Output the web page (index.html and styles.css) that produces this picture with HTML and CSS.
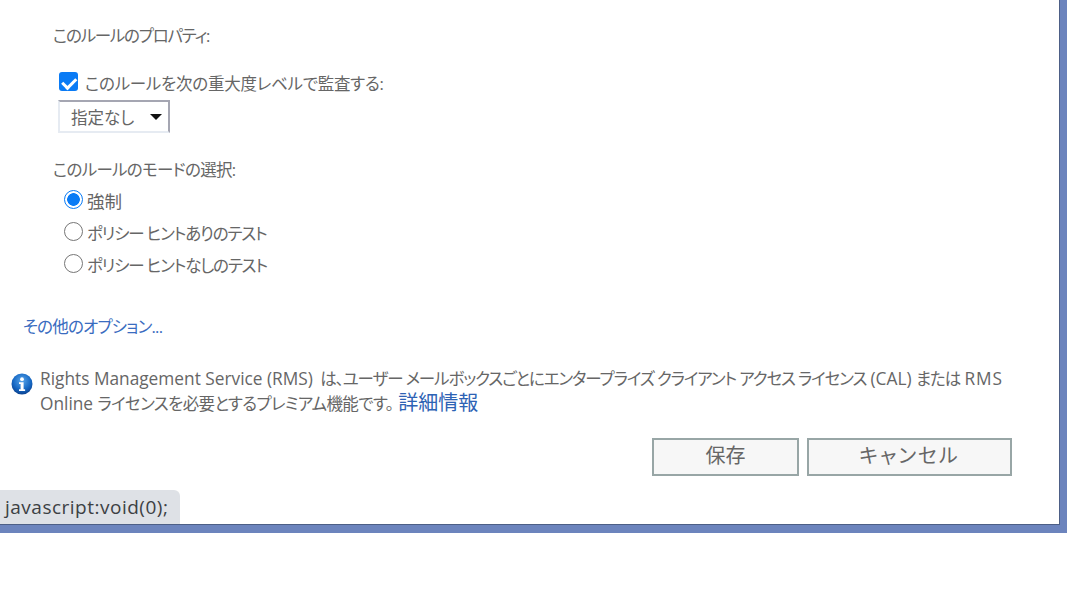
FILE: index.html
```html
<!DOCTYPE html>
<html lang="ja">
<head>
<meta charset="utf-8">
<title>ルールのプロパティ</title>
<link rel="stylesheet" href="styles.css">
</head>
<body>
<div class="frame">
  <main class="panel">
    <section class="props">
      <div class="label heading">このルールのプロパティ:</div>
      <label class="check-row">
        <input type="checkbox" class="check" checked>
        <span>このルールを次の重大度レベルで監査する:</span>
      </label>
      <div class="select"><span>指定なし</span><i class="caret"></i></div>
      <div class="label mode">このルールのモードの選択:</div>
      <div class="radios">
        <label class="radio-row"><input type="radio" name="m" class="radio" checked><span class="kanji">強制</span></label>
        <label class="radio-row"><input type="radio" name="m" class="radio"><span>ポリシー ヒントありのテスト</span></label>
        <label class="radio-row"><input type="radio" name="m" class="radio"><span>ポリシー ヒントなしのテスト</span></label>
      </div>
    </section>
    <a class="more" href="#">その他のオプション...</a>
    <div class="notice">
      <svg class="info" width="22" height="22" viewBox="0 0 22 22" aria-hidden="true">
        <defs>
          <radialGradient id="g" cx="0.5" cy="0.35" r="0.7">
            <stop offset="0" stop-color="#5aa6ea"/>
            <stop offset="0.6" stop-color="#1668c4"/>
            <stop offset="1" stop-color="#0a3a84"/>
          </radialGradient>
        </defs>
        <circle cx="11" cy="11" r="10.5" fill="url(#g)"/>
        <circle cx="11" cy="6.2" r="1.9" fill="#fff"/>
        <path d="M8 9.2h4.6v7h1.5v1.8H8v-1.8h1.6v-5.2H8z" fill="#fff"/>
      </svg>
      <p><span class="lat">Rights Management Service (RMS)</span> <span class="cjk first">は、ユーザー メールボックスごとにエンタープライズ クライアント アクセス ライセンス</span> <span class="lat">(CAL)</span> <span class="cjk">または</span> <span class="lat rms">RMS</span> <span class="lat">Online</span> <span class="cjk second">ライセンスを必要とするプレミアム機能です。</span><a href="#" class="detail">詳細情報</a></p>
    </div>
    <div class="actions">
      <button class="btn save">保存</button>
      <button class="btn cancel">キャンセル</button>
    </div>
    <div class="status">javascript:void(0);</div>
  </main>
</div>
</body>
</html>
```
FILE: styles.css
```css
* { box-sizing: border-box; }
html, body { margin: 0; padding: 0; background: #fff; }
body {
  width: 1067px;
  height: 611px;
  overflow: hidden;
  font-family: "Open Sans", "Noto Sans CJK JP", sans-serif;
  font-feature-settings: "palt";
  color: #666;
  font-size: 16.5px;
}
.frame {
  width: 1067px;
  height: 533px;
  background: #6c84bd;
  padding: 0 7px 8px 0;
}
.panel {
  position: relative;
  height: 525px;
  background: #fff;
  border-right: 1px solid #4d5f86;
  border-bottom: 1px solid #4d5f86;
  overflow: hidden;
}
.props { padding: 25px 0 0 53px; }
.label { height: 22px; line-height: 22px; white-space: nowrap; }
.heading { letter-spacing: -1.25px; }
.check-row {
  display: flex;
  align-items: center;
  height: 22px;
  margin: 25px 0 0 5px;
  letter-spacing: -0.25px;
}
.check {
  appearance: none;
  width: 19px;
  height: 19px;
  margin: 0 7px 3px 1px;
  border-radius: 3px;
  background: #0a7bf5;
  position: relative;
}
.check::after {
  content: "";
  position: absolute;
  left: 6px;
  top: 2.5px;
  width: 5.5px;
  height: 10.5px;
  border: solid #fff;
  border-width: 0 3px 3px 0;
  transform: rotate(45deg);
}
.select {
  display: flex;
  align-items: center;
  width: 112px;
  height: 33px;
  margin: 6px 0 0 5px;
  padding-left: 11px;
  border: 2px solid;
  border-color: #a5a6b2 #a5a6b2 #e6ebf2 #e6ebf2;
}
.caret {
  width: 0;
  height: 0;
  margin-left: 16px;
  border: 6px solid transparent;
  border-top: 6px solid #111;
  border-bottom: 0;
}
.mode { margin-top: 26px; letter-spacing: -0.7px; }
.radios { margin: 2px 0 0 11px; }
.radio-row {
  display: flex;
  align-items: center;
  height: 32px;
  white-space: nowrap;
  letter-spacing: -1.15px;
}
.radio-row span { margin-top: 3px; }
.radio-row .kanji { font-size: 17.5px; letter-spacing: 0; }
.radio {
  appearance: none;
  width: 19px;
  height: 19px;
  margin: 0 4px 0 0;
  border: 1.3px solid #767676;
  border-radius: 50%;
  background: #fff;
}
.radio:checked {
  border-color: #0a7bf5;
  background: radial-gradient(circle, #0a7bf5 0 6px, #fff 6.6px);
}
.more {
  display: block;
  width: max-content;
  margin: 37px 0 0 23px;
  height: 22px;
  line-height: 22px;
  color: #3a6cc0;
  text-decoration: none;
  letter-spacing: -0.8px;
}
.notice {
  display: flex;
  width: 1000px;
  margin: 29px 0 0 11px;
  align-items: flex-start;
}
.info { flex: none; margin: 6px 7px 0 0; }
.notice p {
  margin: 0;
  line-height: 24px;
  width: 970px;
}
.lat { font-size: 17.3px; }
.rms { letter-spacing: 0.8px; }
.cjk { letter-spacing: -1px; }
.first { margin-left: 3px; letter-spacing: -1.1px; }
.second { letter-spacing: -0.6px; }
.detail { color: #2d62b4; text-decoration: none; font-size: 20px; margin-left: 5px; }
.actions {
  display: flex;
  gap: 8px;
  margin: 22px 0 0 652px;
}
.btn {
  height: 38px;
  padding: 0 0 8px;
  background: #f7f7f7;
  border: 2px solid #98a6a6;
  font: inherit;
  font-size: 20px;
  color: #666;
}
.save { width: 147px; }
.cancel { width: 205px; letter-spacing: 2px; }
.status {
  position: absolute;
  left: 0;
  bottom: 0;
  width: 180px;
  height: 34px;
  padding-left: 5px;
  background: #dee1e6;
  border-top-right-radius: 6px;
  line-height: 34px;
  font-size: 19px;
  letter-spacing: 0.5px;
  color: #3c4043;
  white-space: nowrap;
}
```
